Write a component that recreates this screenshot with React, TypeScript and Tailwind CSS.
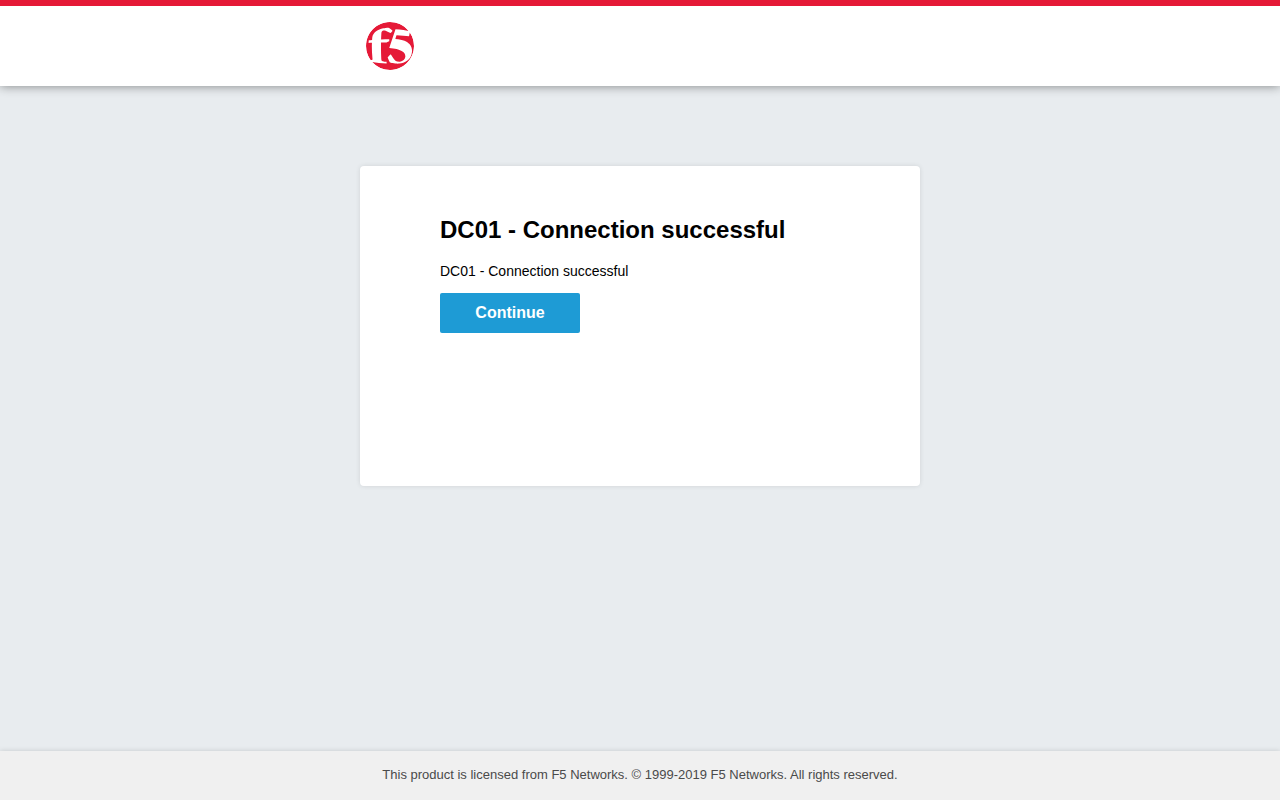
import { SiF5 } from 'react-icons/si'

const page = {
  title: 'DC01 - Connection successful',
  message: 'DC01 - Connection successful',
  footer: 'This product is licensed from F5 Networks. © 1999-2019 F5 Networks. All rights reserved.',
}

function Header() {
  return (
    <header className="border-t-6 border-[#e51937] bg-white shadow-[0_0_10px_rgba(0,0,0,0.45)]">
      <div className="mx-auto flex h-20 w-full max-w-[560px] items-center px-1.5">
        {/* rounded clip drops the registered mark outside the ball */}
        <SiF5 className="size-12 overflow-hidden rounded-full text-[#e51937]" title="F5" />
      </div>
    </header>
  )
}

function MessageCard() {
  return (
    <main className="mx-auto mt-20 min-h-80 w-full max-w-[560px] rounded bg-white px-20 py-12 shadow-[0_0_5px_rgba(0,0,0,0.1)]">
      <h1 className="text-2xl font-bold">{page.title}</h1>
      <p className="mt-4 text-sm leading-[18px]">{page.message}</p>
      <button type="button" className="mt-[13px] h-10 w-[140px] rounded-xs bg-[#1e9bd5] text-base font-bold text-white">
        Continue
      </button>
    </main>
  )
}

export default function App() {
  return (
    <div className="flex min-h-screen flex-col bg-[#e8ecef] font-['Liberation_Sans',Arial,sans-serif] text-black">
      <Header />
      <MessageCard />
      <footer className="mt-auto bg-[#f0f0f0] px-4 pt-3.5 pb-[15px] text-center text-[13px] leading-5 text-[#4a4a4a] shadow-[0_0_5px_rgba(0,0,0,0.15)]">
        {page.footer}
      </footer>
    </div>
  )
}
